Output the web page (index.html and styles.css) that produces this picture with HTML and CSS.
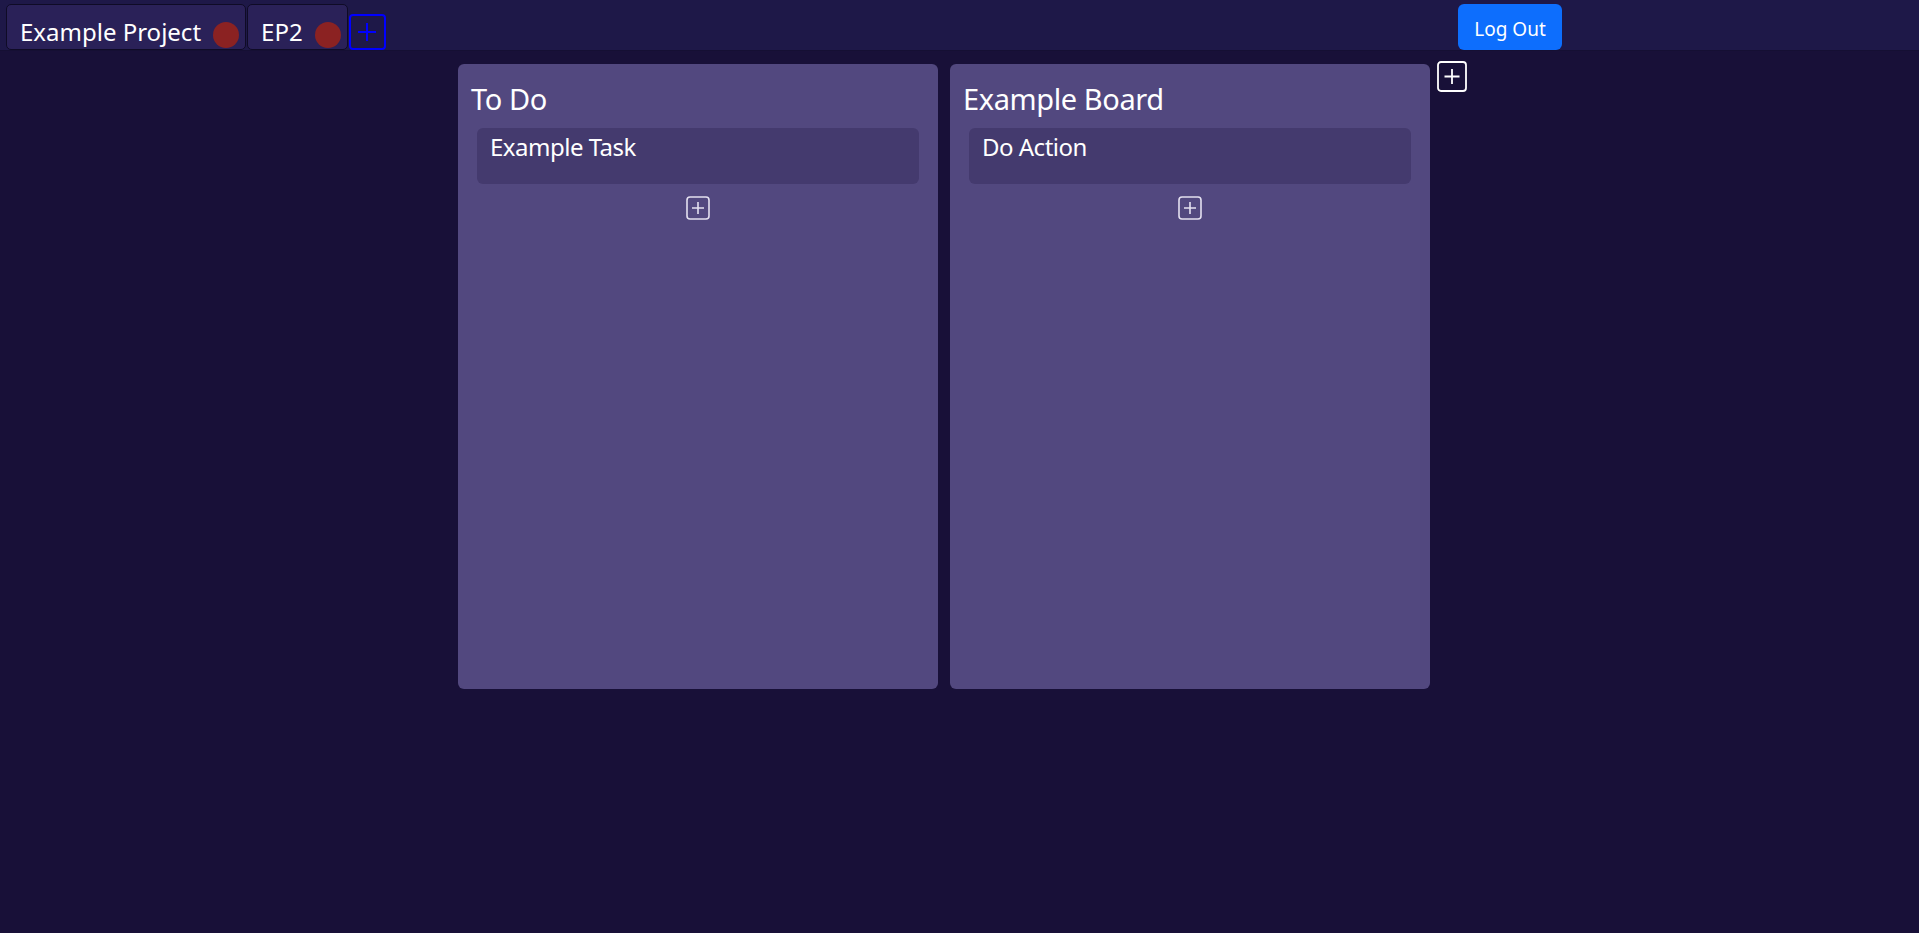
FILE: index.html
```html
<!DOCTYPE html>
<html>
<head>
<meta charset="utf-8">
<link rel="stylesheet" href="styles.css">
</head>
<body>
<header class="topbar">
  <nav class="tabs">
    <div class="tab"><span class="tab-name">Example Project</span><span class="tab-dot"></span></div>
    <div class="tab"><span class="tab-name">EP2</span><span class="tab-dot"></span></div>
    <button class="tab-add" aria-label="Add project">
      <svg viewBox="0 0 20 20" width="20" height="20"><path d="M10 1V19M1 10H19" stroke="#0000ff" stroke-width="2" fill="none"/></svg>
    </button>
  </nav>
  <button class="logout">Log Out</button>
</header>
<main class="boards">
  <section class="board">
    <h2 class="board-title">To Do</h2>
    <div class="task">Example Task</div>
    <button class="add-task" aria-label="Add task">
      <svg viewBox="0 0 24 24" width="24" height="24"><rect x="1" y="1" width="22" height="22" rx="3" stroke="#e4e0f0" stroke-width="1.6" fill="none"/><path d="M12 6V18M6 12H18" stroke="#e4e0f0" stroke-width="1.6"/></svg>
    </button>
  </section>
  <section class="board">
    <h2 class="board-title">Example Board</h2>
    <div class="task">Do Action</div>
    <button class="add-task" aria-label="Add task">
      <svg viewBox="0 0 24 24" width="24" height="24"><rect x="1" y="1" width="22" height="22" rx="3" stroke="#e4e0f0" stroke-width="1.6" fill="none"/><path d="M12 6V18M6 12H18" stroke="#e4e0f0" stroke-width="1.6"/></svg>
    </button>
  </section>
  <button class="add-board" aria-label="Add board">
    <svg viewBox="0 0 30 31" width="30" height="31"><rect x="1" y="1" width="28" height="29" rx="3" stroke="#ffffff" stroke-width="1.8" fill="none"/><path d="M15 8V23M7.5 15.5H22.5" stroke="#ffffff" stroke-width="1.8"/></svg>
  </button>
</main>
</body>
</html>
```
FILE: styles.css
```css
* { box-sizing: border-box; }
html, body { margin: 0; padding: 0; }
body {
  background: #181038;
  color: #ffffff;
  font-family: "Noto Sans", "Open Sans", sans-serif;
  min-height: 933px;
}
.topbar {
  display: flex;
  align-items: flex-end;
  height: 51px;
  background: #1e1848;
  border-bottom: 1px solid #150f33;
  padding: 0 357px 0 6px;
}
.tabs {
  flex: 1;
  display: flex;
  align-items: flex-end;
  gap: 1px;
}
.tab {
  display: flex;
  align-items: flex-start;
  height: 46px;
  padding: 13px 6px 0 13px;
  background: #2a2158;
  border: 1px solid #0f0b26;
  border-radius: 5px;
  font-size: 24px;
  line-height: 1.2;
}
.tab-name { margin-right: 12px; }
.tab-dot {
  margin-top: 4px;
  width: 26px;
  height: 26px;
  border-radius: 50%;
  background: #8b2222;
}
.tab-add {
  width: 37px;
  height: 36px;
  padding: 0;
  display: flex;
  align-items: center;
  justify-content: center;
  background: transparent;
  border: 2px solid #0000ff;
  border-radius: 4px;
}
.logout {
  align-self: flex-start;
  margin-top: 4px;
  width: 104px;
  height: 46px;
  background: #0d6efd;
  color: #ffffff;
  border: none;
  border-radius: 6px;
  font-family: inherit;
  font-size: 19px;
  padding: 3px 0 0 0;
}
.boards {
  display: flex;
  align-items: flex-start;
  gap: 12px;
  padding: 13px 0 0 458px;
}
.board {
  width: 480px;
  height: 625px;
  background: #52487f;
  border-radius: 6px;
  padding: 18px 19px 0 19px;
  display: flex;
  flex-direction: column;
}
.board-title {
  margin: 0 0 11px -6px;
  font-size: 29px;
  font-weight: 400;
  line-height: 1.2;
  letter-spacing: -0.4px;
}
.task {
  height: 56px;
  background: #443a6e;
  border-radius: 6px;
  padding: 5px 13px 0 13px;
  font-size: 24px;
  line-height: 1.2;
  letter-spacing: -0.5px;
}
.add-task {
  align-self: center;
  margin-top: 12px;
  width: 24px;
  height: 24px;
  padding: 0;
  border: none;
  background: transparent;
  display: block;
}
.add-task svg, .add-board svg { display: block; }
.add-board {
  margin-left: -5px;
  margin-top: -3px;
  width: 30px;
  height: 31px;
  padding: 0;
  border: none;
  background: transparent;
}
```
